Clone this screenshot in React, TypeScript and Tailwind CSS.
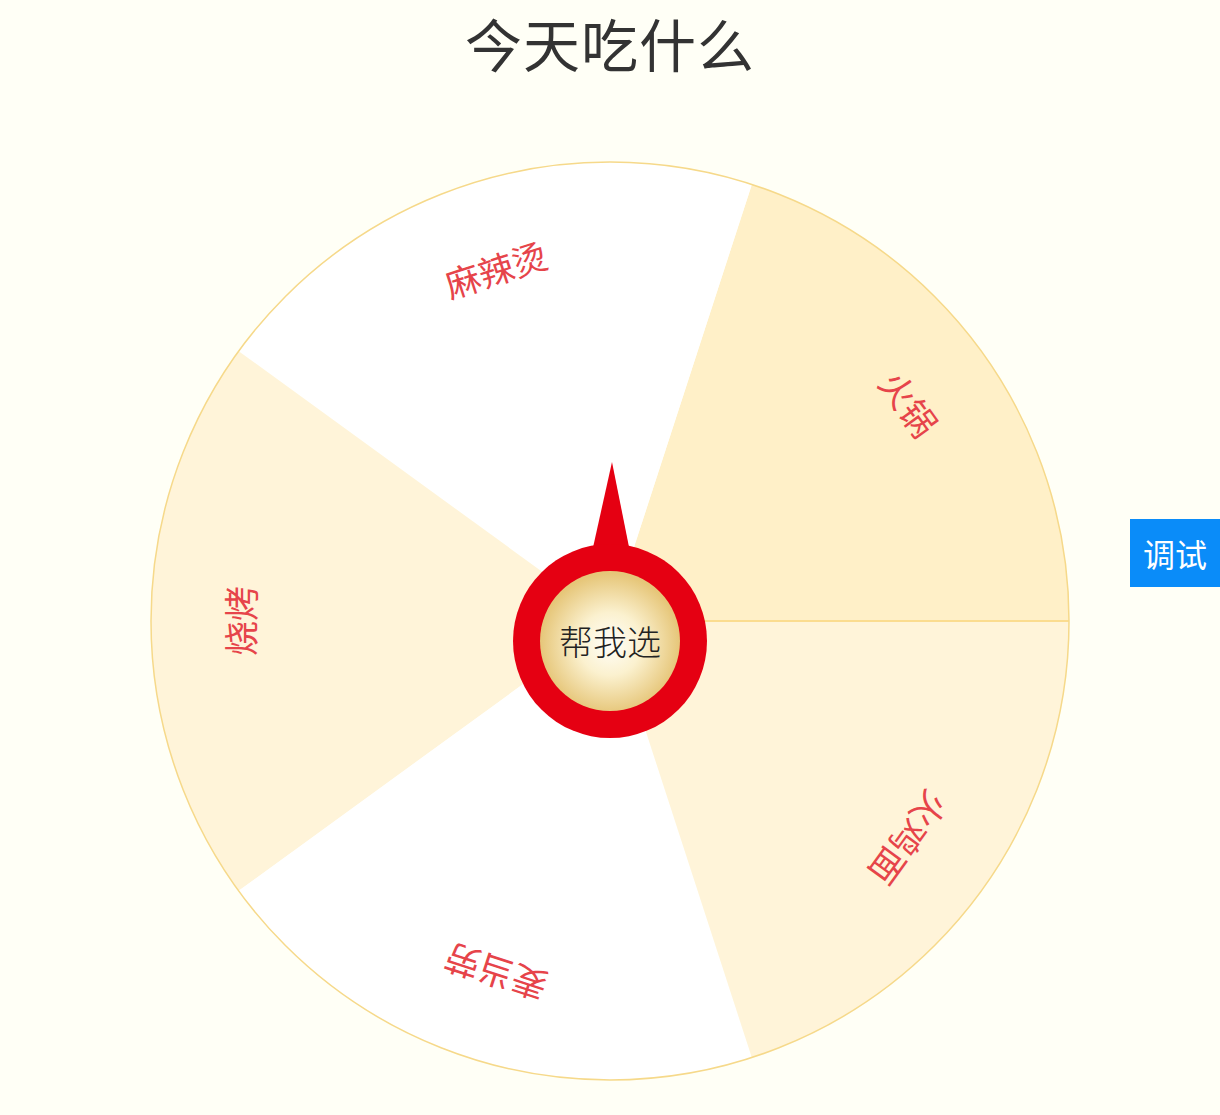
import React from "react"

const CX = 460
const CY = 460
const R = 460

type Slice = { name: string; fill: string }

const slices: Slice[] = [
  { name: "火锅", fill: "#fff0c8" },
  { name: "麻辣烫", fill: "#ffffff" },
  { name: "烧烤", fill: "#fff4d9" },
  { name: "麦当劳", fill: "#ffffff" },
  { name: "火鸡面", fill: "#fff4d9" },
]

// slices go counter-clockwise starting at 3 o'clock
function point(deg: number, r: number) {
  const a = (deg * Math.PI) / 180
  return [CX + r * Math.cos(a), CY - r * Math.sin(a)]
}

function Wheel() {
  const step = 360 / slices.length
  return (
    <svg width="920" height="920" viewBox="0 0 920 920" className="block">
      {slices.map((s, i) => {
        const a0 = i * step
        const a1 = a0 + step
        const [x0, y0] = point(a0, R - 1)
        const [x1, y1] = point(a1, R - 1)
        return (
          <path
            key={s.name}
            d={`M${CX} ${CY} L${x0} ${y0} A${R - 1} ${R - 1} 0 0 0 ${x1} ${y1} Z`}
            fill={s.fill}
          />
        )
      })}
      <line x1={CX} y1={CY} x2={CX + R - 1} y2={CY} stroke="#fbdc8f" strokeWidth="2" />
      <circle cx={CX} cy={CY} r={R - 1} fill="none" stroke="#f6d98a" strokeWidth="1.5" />
      {slices.map((s, i) => {
        const mid = i * step + step / 2
        const [x, y] = point(mid, 371)
        const rot = 90 - mid
        return (
          <text
            key={s.name + "t"}
            x={x}
            y={y}
            transform={`rotate(${rot} ${x} ${y})`}
            textAnchor="middle"
            dominantBaseline="central"
            fill="#e6444a"
            fontSize="35"
            style={{ fontFamily: '"Noto Sans CJK SC", "Noto Sans", sans-serif', fontWeight: 400 }}
          >
            {s.name}
          </text>
        )
      })}
    </svg>
  )
}

function SpinButton() {
  return (
    <div className="absolute left-[362px] top-[301px] flex h-[277px] w-[196px] flex-col items-center">
      <svg width="196" height="277" viewBox="0 0 196 277" className="absolute left-0 top-0">
        <defs>
          <radialGradient id="btnGrad" cx="50%" cy="52%" r="50%">
            <stop offset="0%" stopColor="#fffefa" />
            <stop offset="45%" stopColor="#fbf1cf" />
            <stop offset="100%" stopColor="#e6c679" />
          </radialGradient>
        </defs>
        <path d="M100 0 L80 90 L118 90 Z" fill="#e50012" />
        <circle cx="98" cy="179" r="97" fill="#e50012" />
        <circle cx="98" cy="179" r="70" fill="url(#btnGrad)" />
      </svg>
      <div className="relative mt-[155px] text-[34px] font-light leading-[48px] text-[#222] [font-family:'Noto_Sans_CJK_SC',sans-serif]">
        帮我选
      </div>
    </div>
  )
}

export default function App() {
  return (
    <div className="relative min-h-screen w-full bg-[#fffff6] [font-family:'Noto_Sans_CJK_SC','Noto_Sans',sans-serif]">
      <h1 className="m-0 text-center text-[57px] font-normal leading-[84px] tracking-[1px] text-[#333]">今天吃什么</h1>
      <div className="mx-auto mt-[77px] w-[920px]">
        <div className="relative h-[920px] w-[920px]">
          <Wheel />
          <SpinButton />
        </div>
      </div>
      <button className="absolute right-0 top-[519px] flex h-[68px] w-[90px] items-center justify-center bg-[#0a8cf9] text-[32px] text-white">
        调试
      </button>
    </div>
  )
}
